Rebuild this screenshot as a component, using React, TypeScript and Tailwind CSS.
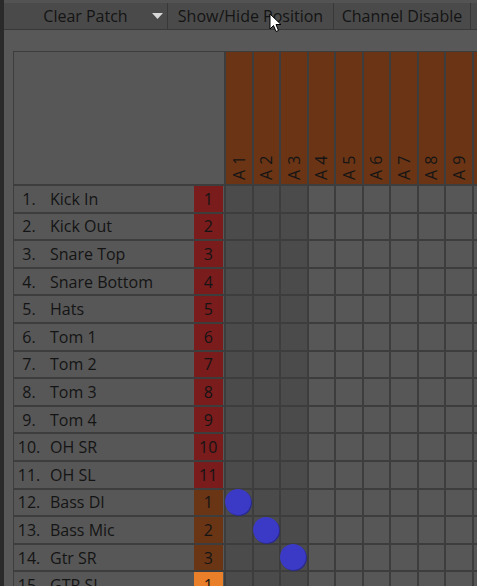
import React from "react";

type Row = { n: number; name: string; box: string; kind: "red" | "brown" | "orange" };

const rows: Row[] = [
  { n: 1, name: "Kick In", box: "1", kind: "red" },
  { n: 2, name: "Kick Out", box: "2", kind: "red" },
  { n: 3, name: "Snare Top", box: "3", kind: "red" },
  { n: 4, name: "Snare Bottom", box: "4", kind: "red" },
  { n: 5, name: "Hats", box: "5", kind: "red" },
  { n: 6, name: "Tom 1", box: "6", kind: "red" },
  { n: 7, name: "Tom 2", box: "7", kind: "red" },
  { n: 8, name: "Tom 3", box: "8", kind: "red" },
  { n: 9, name: "Tom 4", box: "9", kind: "red" },
  { n: 10, name: "OH SR", box: "10", kind: "red" },
  { n: 11, name: "OH SL", box: "11", kind: "red" },
  { n: 12, name: "Bass DI", box: "1", kind: "brown" },
  { n: 13, name: "Bass Mic", box: "2", kind: "brown" },
  { n: 14, name: "Gtr SR", box: "3", kind: "brown" },
  { n: 15, name: "GTR SL", box: "1", kind: "orange" },
];

const cols = Array.from({ length: 10 }, (_, i) => i + 1);

const patched: Record<number, number> = { 12: 1, 13: 2, 14: 3 };

function boxClass(kind: Row["kind"]) {
  if (kind === "red") return "bg-[#7a1b1c]";
  if (kind === "brown") return "bg-[#6a3515]";
  return "bg-[#ea7f29]";
}

export default function App() {
  return (
    <div
      className="relative w-[477px] h-[586px] overflow-hidden bg-[#585858] flex text-[#141414]"
      style={{ fontFamily: '"Open Sans", "Noto Sans", sans-serif' }}
    >
      <div className="w-[4px] h-full bg-[#2a2a2a] shrink-0" />
      <div className="flex flex-col min-w-0 flex-1">
        {/* toolbar */}
        <div className="h-[30px] shrink-0 bg-[#4a4a4a] border-t-[3px] border-t-[#535353] border-b border-b-[#383838] flex">
          <div className="relative w-[163px] h-full flex items-center justify-center text-[16px] leading-none pb-[1px]">
            Clear Patch
            <svg className="absolute left-[148px] top-[10px]" width="11" height="6" viewBox="0 0 11 6">
              <polygon points="0,0 11,0 5.5,6" fill="#d8d8d8" />
            </svg>
          </div>
          <div className="w-[166px] h-full border-l border-[#383838] flex items-center justify-center text-[16px] leading-none pb-[1px]">
            Show/Hide Position
          </div>
          <div className="w-[138px] h-full border-l border-r border-[#383838] flex items-center justify-center text-[16px] leading-none pb-[1px]">
            Channel Disable
          </div>
          <div className="flex-1" />
        </div>

        {/* patch grid */}
        <div className="pt-[21px] pl-[9px]">
          <div
            className="grid w-max gap-[2px] bg-[#3d3d3d] pt-[1px] pl-[1px]"
            style={{
              gridTemplateColumns: "210px repeat(10, 25.5px)",
              gridTemplateRows: "132px repeat(15, 25.6px)",
            }}
          >
            <div className="bg-[#575757]" />
            {cols.map((c) => (
              <div key={c} className="bg-[#6b3414] flex items-end justify-center pb-[4px]">
                <span className="[writing-mode:vertical-rl] rotate-180 text-[16px] leading-none tracking-[0.5px] whitespace-nowrap">
                  A {c}
                </span>
              </div>
            ))}
            {rows.map((r) => (
              <React.Fragment key={r.n}>
                <div className="bg-[#575757] flex items-center text-[16px] leading-none">
                  <span className="w-[30px] text-center">{r.n}.</span>
                  <span className="pl-[6px]">{r.name}</span>
                  <div
                    className={`ml-auto mr-[1px] w-[29.5px] h-full flex items-center justify-center ${boxClass(r.kind)}`}
                  >
                    {r.box}
                  </div>
                </div>
                {cols.map((c) => (
                  <div
                    key={c}
                    className={`relative ${c <= 3 ? "bg-[#4b4b4b]" : "bg-[#575757]"}`}
                  >
                    {patched[r.n] === c && (
                      <div className="absolute left-[-1px] top-[-0.5px] w-[26px] h-[26px] rounded-full bg-[#3a3ac6] shadow-[1px_1px_0_#2a2a8c]" />
                    )}
                  </div>
                ))}
              </React.Fragment>
            ))}
          </div>
        </div>
      </div>

      {/* mouse cursor */}
      <svg className="absolute left-[269px] top-[13px]" width="13" height="20" viewBox="0 0 13 20">
        <path
          d="M1 1 L1 16 L4.5 12.5 L7 18.5 L9.5 17.5 L7 11.5 L12 11.5 Z"
          fill="#ffffff"
          stroke="#000000"
          strokeWidth="1"
          strokeLinejoin="round"
        />
      </svg>
    </div>
  );
}
